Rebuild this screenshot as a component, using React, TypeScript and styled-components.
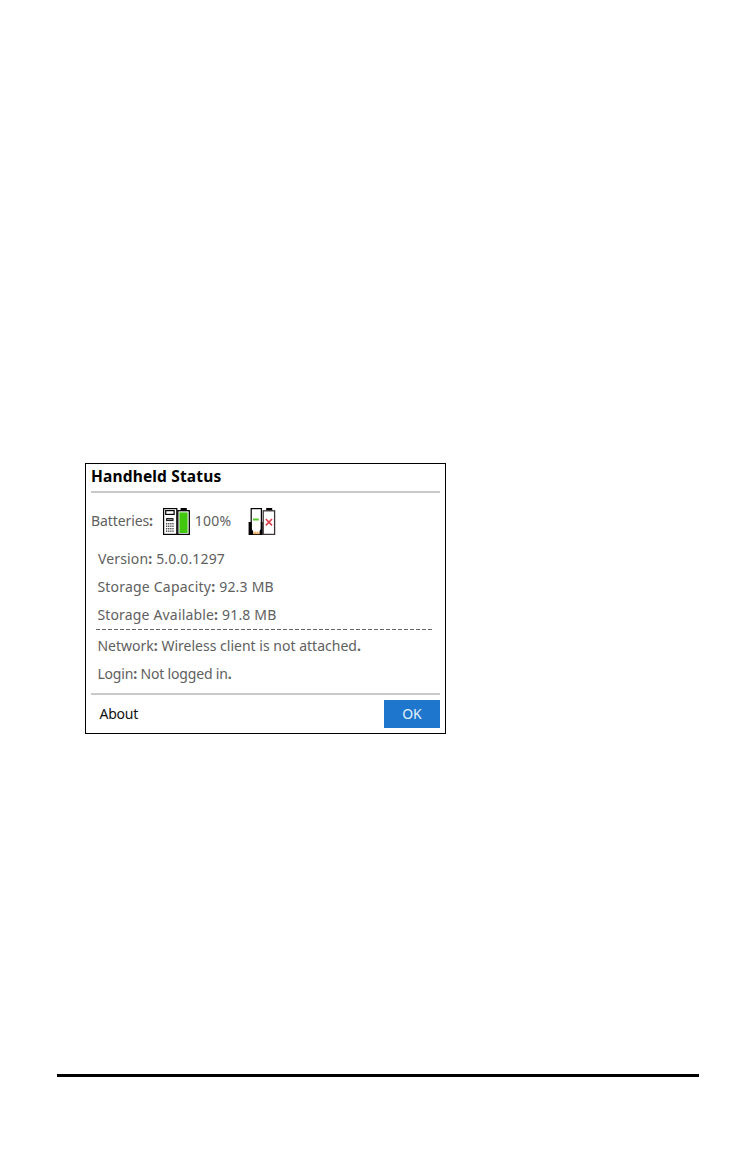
import * as React from "react";
import { createGlobalStyle, styled } from "styled-components";

interface IStatusRow {
  text: string;
  spacing: number;
  indent?: number;
}

const storageRows: IStatusRow[] = [
  { text: "Version: 5.0.0.1297", spacing: 0.15, indent: 0.6 },
  { text: "Storage Capacity: 92.3 MB", spacing: 0.21 },
  { text: "Storage Available: 91.8 MB", spacing: 0.17 },
];

const networkRows: IStatusRow[] = [
  { text: "Network: Wireless client is not attached.", spacing: 0.01 },
  { text: "Login: Not logged in.", spacing: -0.17 },
];

const keypad = [0, 1, 2, 3].flatMap((row) =>
  [0, 1, 2, 3].map((col) => ({ x: 3 + col * 2.1, y: 15 + row * 2.5 }))
);

function HandheldIcon() {
  return (
    <svg width="27" height="27" viewBox="0 0 27 27">
      <rect x="0.6" y="0.6" width="13.2" height="25.8" fill="#fff" stroke="#000" strokeWidth="1.2" />
      <rect x="2.7" y="2.6" width="8.4" height="3.8" fill="#fff" stroke="#000" strokeWidth="1.2" />
      <rect x="3.6" y="10.6" width="6.4" height="2" fill="#999" stroke="#111" strokeWidth="1" />
      {keypad.map(({ x, y }) => (
        <rect key={`${x}-${y}`} x={x} y={y} width="1.3" height="1.4" fill="#444" />
      ))}
      <rect x="17.6" y="0" width="6.2" height="2.6" fill="#000" />
      <rect x="14.8" y="2.7" width="11.5" height="23.7" fill="#fff" stroke="#000" strokeWidth="1.3" />
      <rect x="16.4" y="4.4" width="8.2" height="20.6" fill="#42c70f" />
    </svg>
  );
}

function CradleIcon() {
  return (
    <svg width="28" height="27" viewBox="0 0 28 27">
      <rect x="3.2" y="0.6" width="10.2" height="25.8" fill="#fff" stroke="#000" strokeWidth="1.2" />
      <path d="M5 11.5h5.8" stroke="#58c82c" strokeWidth="2" />
      <path d="M0.6 14h3v7l1.4 2v4H0.6z M12.8 14h2v13h-3.2v-4l1.2-2z" fill="#000" />
      <path d="M5.2 25h6.2" stroke="#f3a64a" strokeWidth="2.4" strokeDasharray="1.4 0.5" />
      <rect x="18.2" y="0" width="6" height="2.6" fill="#000" />
      <rect x="15.2" y="2.8" width="11.4" height="23.6" fill="#fff" stroke="#3c3438" strokeWidth="1.3" />
      <path d="M17.8 11l6.2 6.4M24 11l-6.2 6.4" stroke="#e0404c" strokeWidth="1.6" />
    </svg>
  );
}

// colons and closing periods are drawn heavier than the rest of the text
function StatusText({ text, spacing }: { text: string; spacing: number }) {
  return (
    <Label $spacing={spacing}>
      {text
        .split(/(:|\.$)/)
        .map((part, index) =>
          part === ":" || part === "." ? <b key={index}>{part}</b> : part
        )}
    </Label>
  );
}

function StatusRows({ rows }: { rows: IStatusRow[] }) {
  return (
    <>
      {rows.map((row) => (
        <Row key={row.text} $indent={row.indent ?? 0}>
          <StatusText text={row.text} spacing={row.spacing} />
        </Row>
      ))}
    </>
  );
}

export default function App() {
  return (
    <Page>
      <GlobalStyle />
      <Dialog>
        <Title>Handheld Status</Title>
        <Batteries>
          <Battery $gap={9.8}>
            <StatusText text="Batteries:" spacing={-0.1} />
            <HandheldIcon />
          </Battery>
          <Battery $gap={17}>
            <StatusText text="100%" spacing={0.25} />
            <CradleIcon />
          </Battery>
        </Batteries>
        <Section>
          <StatusRows rows={storageRows} />
        </Section>
        <Divider />
        <Section>
          <StatusRows rows={networkRows} />
        </Section>
        <Actions>
          <AboutButton>About</AboutButton>
          <OkButton>OK</OkButton>
        </Actions>
      </Dialog>
      <PageRule />
    </Page>
  );
}

const GlobalStyle = createGlobalStyle`
  body {
    margin: 0;
    background: #fff;
  }
`;

const Page = styled.div`
  box-sizing: border-box;
  display: flex;
  flex-direction: column;
  height: 1161px;
  padding: 463px 57px 84px;
  background: #fff;
  font-family: "Noto Sans", "Open Sans", sans-serif;
  font-size: 14px;
`;

const Dialog = styled.div`
  box-sizing: border-box;
  display: flex;
  flex-direction: column;
  width: 361px;
  height: 271px;
  margin-left: 28px;
  padding: 0 5px;
  border: 1px solid #000;
  background: #fff;
`;

const Title = styled.h1`
  box-sizing: border-box;
  height: 29px;
  margin: 0;
  border-bottom: 2px solid #c9c9c9;
  color: #000;
  font-size: 15.5px;
  font-weight: 700;
  letter-spacing: 0.16px;
  line-height: 25px;
  white-space: nowrap;
`;

const Batteries = styled.div`
  display: flex;
  gap: 5px;
  padding: 15px 0 9px;
`;

const Battery = styled.div<{ $gap: number }>`
  display: flex;
  align-items: center;
  gap: ${({ $gap }) => $gap}px;
  height: 27px;

  span {
    padding-bottom: 2px;
  }

  svg {
    flex: none;
  }
`;

const Section = styled.div`
  padding-left: 6.4px;
`;

const Row = styled.div<{ $indent: number }>`
  display: flex;
  align-items: center;
  height: 28px;
  padding-left: ${({ $indent }) => $indent}px;
`;

const Label = styled.span<{ $spacing: number }>`
  color: #606060;
  letter-spacing: ${({ $spacing }) => $spacing}px;
  white-space: pre;
`;

const Divider = styled.div`
  height: 1px;
  margin: 1px 8px 1px 5px;
  background: repeating-linear-gradient(90deg, #666 0 4px, #fff 4px 6.036px);
`;

const Actions = styled.div`
  display: flex;
  align-items: center;
  justify-content: space-between;
  margin-top: auto;
  padding: 5px 0;
  border-top: 2px solid #c9c9c9;
`;

const AboutButton = styled.button`
  padding: 0 0 1px 8.5px;
  border: 0;
  background: none;
  color: #111;
  font: inherit;
  letter-spacing: -0.25px;
`;

const OkButton = styled.button`
  width: 56px;
  height: 28px;
  padding: 0 0 1px;
  border: 0;
  background: #1e76cd;
  color: #e4f1fd;
  font: inherit;
`;

const PageRule = styled.hr`
  width: 100%;
  height: 3px;
  margin: auto 0 0;
  border: 0;
  background: #000;
`;
